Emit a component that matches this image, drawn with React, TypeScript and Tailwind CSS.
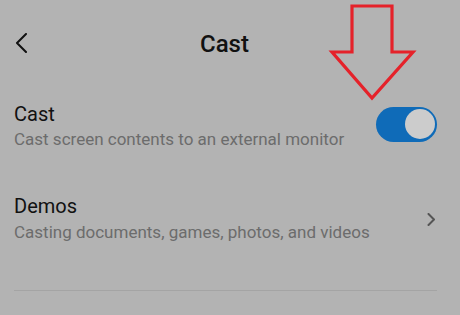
export default function App() {
  return (
    <div
      className="relative w-[460px] h-[315px] overflow-hidden bg-[#b3b3b3]"
      style={{ fontFamily: "Roboto, 'Noto Sans', sans-serif" }}
    >
      <div className="relative flex h-[87px] items-center justify-center pr-[11px]">
        <svg
          className="absolute left-[15px] top-[33px]"
          width="13"
          height="20"
          viewBox="0 0 13 20"
          fill="none"
          stroke="#111"
          strokeWidth="2"
          strokeLinecap="round"
          strokeLinejoin="round"
        >
          <path d="M11 1 L2 10 L11 19" />
        </svg>
        <h1 className="text-[24px] font-medium leading-none text-[#111]">Cast</h1>
      </div>

      <div className="flex items-center justify-between pl-[14px] pr-[23px] pt-[15px]">
        <div className="flex flex-col gap-[1px]">
          <span className="text-[20px] leading-[24px] text-[#111]">Cast</span>
          <span className="text-[17px] leading-[24px] text-[#6c6c6c]">
            Cast screen contents to an external monitor
          </span>
        </div>
        <div className="mb-[5px] flex h-[35px] w-[61px] items-center justify-end rounded-full bg-[#0f6bb8] pr-[2px]">
          <div className="h-[30px] w-[30px] rounded-full bg-[#cccccc]" />
        </div>
      </div>

      <div className="flex items-center justify-between pl-[14px] pr-[24px] pt-[43px]">
        <div className="flex flex-col gap-[2px]">
          <span className="text-[20px] leading-[24px] text-[#111]">Demos</span>
          <span className="text-[17px] leading-[24px] text-[#6c6c6c]">
            Casting documents, games, photos, and videos
          </span>
        </div>
        <svg
          width="9"
          height="13"
          viewBox="0 0 9 13"
          fill="none"
          stroke="#555"
          strokeWidth="2"
          strokeLinecap="round"
          strokeLinejoin="round"
        >
          <path d="M1.5 1 L7 6.5 L1.5 12" />
        </svg>
      </div>

      <div className="mx-[14px] mt-[46px] h-px w-[423px] bg-[#a4a4a4]" />

      <svg
        className="absolute left-0 top-0"
        width="460"
        height="315"
        viewBox="0 0 460 315"
        fill="none"
      >
        <polygon
          points="352,6 392,6 392,52 413,52 372,98 332,52 352,52"
          stroke="#e5222a"
          strokeWidth="3.2"
          strokeLinejoin="miter"
        />
      </svg>
    </div>
  );
}
